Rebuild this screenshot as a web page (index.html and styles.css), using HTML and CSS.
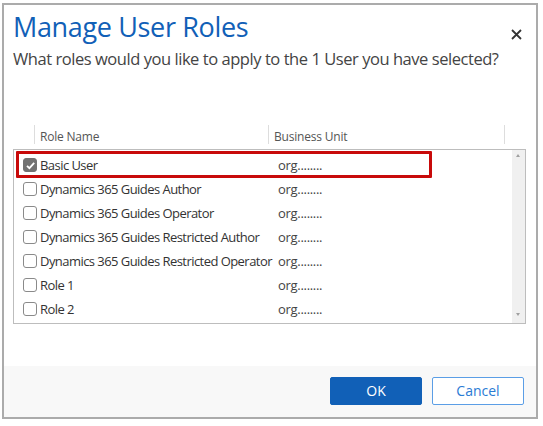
FILE: index.html
```html
<!DOCTYPE html>
<html lang="en">
<head>
<meta charset="utf-8">
<title>Manage User Roles</title>
<link rel="stylesheet" href="styles.css">
</head>
<body>
<div class="dialog">
  <div class="head">
    <h1 class="title">Manage User Roles</h1>
    <button class="close" aria-label="Close">
      <svg width="11" height="11" viewBox="0 0 11 11"><path d="M1 1L10 10M10 1L1 10" stroke="#333" stroke-width="1.8" fill="none"/></svg>
    </button>
  </div>
  <p class="subtitle">What roles would you like to apply to the 1 User you have selected?</p>
  <div class="cols">
    <div class="col col-role">Role Name</div>
    <div class="col col-bu">Business Unit</div>
    <div class="col col-end"></div>
  </div>
  <div class="grid">
    <div class="rows">
      <div class="row"><span class="cb checked"><svg width="13" height="13" viewBox="0 0 13 13"><path d="M3 6.8L5.4 9.2L10.2 3.8" stroke="#fff" stroke-width="1.8" fill="none"/></svg></span><span class="name">Basic User</span><span class="bu">org........</span></div>
      <div class="row"><span class="cb"></span><span class="name">Dynamics 365 Guides Author</span><span class="bu">org........</span></div>
      <div class="row"><span class="cb"></span><span class="name">Dynamics 365 Guides Operator</span><span class="bu">org........</span></div>
      <div class="row"><span class="cb"></span><span class="name">Dynamics 365 Guides Restricted Author</span><span class="bu">org........</span></div>
      <div class="row"><span class="cb"></span><span class="name">Dynamics 365 Guides Restricted Operator</span><span class="bu">org........</span></div>
      <div class="row"><span class="cb"></span><span class="name">Role 1</span><span class="bu">org........</span></div>
      <div class="row"><span class="cb"></span><span class="name">Role 2</span><span class="bu">org........</span></div>
    </div>
    <div class="scrollbar">
      <span class="arrow up"></span>
      <span class="arrow down"></span>
    </div>
    <div class="highlight"></div>
  </div>
  <div class="footer">
    <button class="btn primary">OK</button>
    <button class="btn secondary">Cancel</button>
  </div>
</div>
</body>
</html>
```

FILE: styles.css
```css
* { box-sizing: border-box; }
html, body { margin: 0; padding: 0; background: #fff; }
body { font-family: "Open Sans", "Noto Sans", sans-serif; color: #333; }

.dialog {
  margin: 3px 0 0 2px;
  width: 536px;
  height: 416px;
  border: 2px solid #ababab;
  display: flex;
  flex-direction: column;
  padding: 0;
}

.head {
  display: flex;
  justify-content: space-between;
  align-items: flex-start;
  padding: 5px 0 0 9px;
}
.title {
  margin: 0;
  font-weight: 400;
  font-size: 27px;
  letter-spacing: -0.35px;
  line-height: 34px;
  color: #1160b7;
}
.close {
  border: 0;
  background: none;
  padding: 0;
  margin: 19px 14px 0 0;
  width: 11px;
  height: 11px;
  display: flex;
}

.subtitle {
  margin: 3px 0 0 9px;
  font-size: 16.5px;
  letter-spacing: -0.45px;
  line-height: 24px;
  color: #444;
  white-space: nowrap;
}

.cols {
  display: flex;
  margin: 54px 0 0 30px;
  height: 19px;
  font-size: 12px;
  letter-spacing: -0.2px;
  color: #555;
}
.col {
  height: 19px;
  line-height: 23px;
  border-left: 1px solid #ddd;
  padding-left: 5px;
}
.col-role { width: 234px; }
.col-bu { width: 236px; }
.col-end { width: 1px; }

.grid {
  position: relative;
  margin: 5px 0 0 9px;
  width: 513px;
  height: 175px;
  border: 1px solid #bdbdbd;
  display: flex;
}
.rows {
  flex: 1;
  padding: 3px 0 0 9px;
}
.row {
  height: 24px;
  display: flex;
  align-items: center;
  font-size: 13px;
  letter-spacing: -0.55px;
  color: #333;
}
.cb {
  width: 14px;
  height: 14px;
  border: 1px solid #8a8a8a;
  border-radius: 3px;
  flex: none;
  display: flex;
  background: #fff;
}
.cb.checked { background: #727272; border-color: #727272; }
.cb.checked svg { margin: -0.5px; }
.name { width: 241px; padding-left: 3px; white-space: nowrap; }
.bu { color: #444; letter-spacing: -0.3px; }

.scrollbar {
  width: 13px;
  background: #f0f0f0;
  position: relative;
}
.arrow {
  position: absolute;
  left: 4px;
  width: 0; height: 0;
  border-left: 2.5px solid transparent;
  border-right: 2.5px solid transparent;
}
.arrow.up { top: 4px; border-bottom: 3px solid #a0a0a0; }
.arrow.down { bottom: 7px; border-top: 3px solid #a0a0a0; }

.highlight {
  position: absolute;
  left: 2px;
  top: 1px;
  width: 416px;
  height: 27px;
  border: 3px solid #c80a0a;
  border-radius: 1px;
  pointer-events: none;
}

.footer {
  margin-top: auto;
  height: 51px;
  background: #f8f8f8;
  display: flex;
  justify-content: flex-end;
  gap: 10px;
  padding: 11px 12px 0 0;
}
.btn {
  width: 92px;
  height: 28px;
  border-radius: 2px;
  font-family: inherit;
  font-size: 14px;
  line-height: 1;
  padding: 0;
}
.btn.primary {
  background: #1160b7;
  border: 1px solid #1160b7;
  color: #fff;
}
.btn.secondary {
  background: #fff;
  border: 1px solid #5b9ee6;
  color: #2a7bd4;
}
```
